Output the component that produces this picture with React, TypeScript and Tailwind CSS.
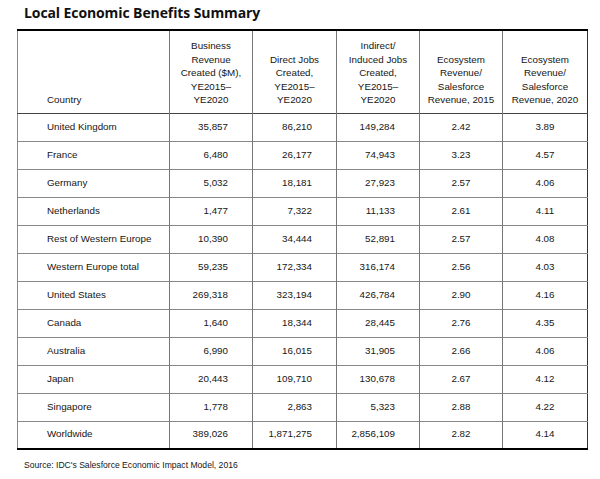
import React from "react";

const headers = [
  "Country",
  "Business Revenue Created ($M), YE2015– YE2020",
  "Direct Jobs Created, YE2015– YE2020",
  "Indirect/ Induced Jobs Created, YE2015– YE2020",
  "Ecosystem Revenue/ Salesforce Revenue, 2015",
  "Ecosystem Revenue/ Salesforce Revenue, 2020",
];

const headerLines: string[][] = [
  ["Country"],
  ["Business", "Revenue", "Created ($M),", "YE2015–", "YE2020"],
  ["Direct Jobs", "Created,", "YE2015–", "YE2020"],
  ["Indirect/", "Induced Jobs", "Created,", "YE2015–", "YE2020"],
  ["Ecosystem", "Revenue/", "Salesforce", "Revenue, 2015"],
  ["Ecosystem", "Revenue/", "Salesforce", "Revenue, 2020"],
];

const rows = [
  ["United Kingdom", "35,857", "86,210", "149,284", "2.42", "3.89"],
  ["France", "6,480", "26,177", "74,943", "3.23", "4.57"],
  ["Germany", "5,032", "18,181", "27,923", "2.57", "4.06"],
  ["Netherlands", "1,477", "7,322", "11,133", "2.61", "4.11"],
  ["Rest of Western Europe", "10,390", "34,444", "52,891", "2.57", "4.08"],
  ["Western Europe total", "59,235", "172,334", "316,174", "2.56", "4.03"],
  ["United States", "269,318", "323,194", "426,784", "2.90", "4.16"],
  ["Canada", "1,640", "18,344", "28,445", "2.76", "4.35"],
  ["Australia", "6,990", "16,015", "31,905", "2.66", "4.06"],
  ["Japan", "20,443", "109,710", "130,678", "2.67", "4.12"],
  ["Singapore", "1,778", "2,863", "5,323", "2.88", "4.22"],
  ["Worldwide", "389,026", "1,871,275", "2,856,109", "2.82", "4.14"],
];

const widths = ["w-[152px]", "w-[83px]", "w-[84px]", "w-[83px]", "w-[83px]", "w-[85px]"];

export default function App() {
  return (
    <div className="w-[600px] h-[479px] bg-white text-[#161616] font-['Liberation_Sans',Arial,sans-serif]">
      <div className="pl-[24px] pt-[3px] leading-[20px] text-[14px] tracking-[-0.1px] font-bold text-[#111] font-['Open_Sans',sans-serif]">
        Local Economic Benefits Summary
      </div>

      <table
        className="ml-[17px] mt-[6px] w-[570px] table-fixed border-collapse border-t-2 border-t-black border-b-2 border-b-black border-l border-l-[#888] border-r border-r-[#333] text-[9.8px]"
        aria-label={headers.join(" | ")}
      >
        <colgroup>
          {widths.map((w, i) => (
            <col key={i} className={w} />
          ))}
        </colgroup>
        <thead>
          <tr className="h-[83px] border-b border-b-[#444]">
            {headerLines.map((lines, i) => (
              <th
                key={i}
                className={`align-bottom font-normal leading-[13.5px] pb-[6px] ${
                  i === 0 ? "text-left pl-[29px]" : "text-center"
                } ${i > 0 ? "border-l border-l-[#777]" : ""}`}
              >
                {lines.map((l, j) => (
                  <div key={j}>{l}</div>
                ))}
              </th>
            ))}
          </tr>
        </thead>
        <tbody>
          {rows.map((r, i) => (
            <tr key={i} className={`h-[28px] ${i > 0 ? "border-t border-t-[#888]" : ""}`}>
              {r.map((c, j) => (
                <td
                  key={j}
                  className={`align-middle ${j > 0 ? "border-l border-l-[#777]" : ""} ${
                    j === 0 ? "text-left pl-[29px]" : j < 4 ? "text-right pr-[24px]" : "text-center"
                  }`}
                >
                  {c}
                </td>
              ))}
            </tr>
          ))}
        </tbody>
      </table>

      <div className="pl-[24px] mt-[9px] text-[8.6px] leading-[12px]">
        Source: IDC's Salesforce Economic Impact Model, 2016
      </div>
    </div>
  );
}
